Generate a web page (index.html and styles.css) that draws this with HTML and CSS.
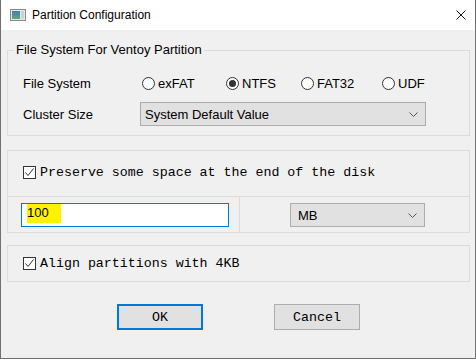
FILE: index.html
```html
<!DOCTYPE html>
<html lang="en">
<head>
  <meta charset="UTF-8">
  <title>Partition Configuration</title>
  <link rel="stylesheet" href="styles.css">
</head>
<body>
  <div class="window">
    <div class="titlebar">
      <svg class="app-icon" width="16" height="12" viewBox="0 0 16 12">
        <defs>
          <linearGradient id="pane" x1="0" y1="0" x2="0" y2="1">
            <stop offset="0" stop-color="#3f7fb8"/>
            <stop offset="1" stop-color="#5aa87a"/>
          </linearGradient>
        </defs>
        <rect x="0.5" y="0.5" width="15" height="11" fill="#e8e8e8" stroke="#8a8a8a"/>
        <rect x="2" y="2" width="8" height="8" fill="url(#pane)"/>
        <rect x="11" y="2" width="3" height="8" fill="#c9d3dc"/>
      </svg>
      <span class="title">Partition Configuration</span>
      <svg class="close" width="10" height="10" viewBox="0 0 10 10">
        <path d="M0.5 0.5 L9.5 9.5 M9.5 0.5 L0.5 9.5" stroke="#111" stroke-width="1"/>
      </svg>
    </div>

    <div class="content">
      <fieldset class="group">
        <legend>File System For Ventoy Partition</legend>
        <div class="form-row">
          <span class="label">File System</span>
          <div class="radios">
            <label class="radio"><span class="dot"></span>exFAT</label>
            <label class="radio checked"><span class="dot"></span>NTFS</label>
            <label class="radio"><span class="dot"></span>FAT32</label>
            <label class="radio"><span class="dot"></span>UDF</label>
          </div>
        </div>
        <div class="form-row select-row">
          <span class="label">Cluster Size</span>
          <div class="combo combo-wide">
            <span>System Default Value</span>
            <svg class="chevron" width="9" height="5" viewBox="0 0 9 5"><path d="M0.5 0.5 L4.5 4.5 L8.5 0.5" fill="none" stroke="#555"/></svg>
          </div>
        </div>
      </fieldset>

      <div class="box preserve">
        <div class="check-row tall">
          <span class="checkbox">
            <svg width="11" height="11" viewBox="0 0 11 11"><path d="M1.5 5.5 L4 8.5 L9.5 1.5" fill="none" stroke="#333" stroke-width="1"/></svg>
          </span>
          <span class="mono">Preserve some space at the end of the disk</span>
        </div>
        <div class="size-row">
          <div class="size-cell">
            <div class="textbox"><span class="mark">100</span></div>
          </div>
          <div class="unit-cell">
            <div class="combo combo-unit">
              <span>MB</span>
              <svg class="chevron" width="9" height="5" viewBox="0 0 9 5"><path d="M0.5 0.5 L4.5 4.5 L8.5 0.5" fill="none" stroke="#555"/></svg>
            </div>
          </div>
        </div>
      </div>

      <div class="box align">
        <div class="check-row">
          <span class="checkbox">
            <svg width="11" height="11" viewBox="0 0 11 11"><path d="M1.5 5.5 L4 8.5 L9.5 1.5" fill="none" stroke="#333" stroke-width="1"/></svg>
          </span>
          <span class="mono">Align partitions with 4KB</span>
        </div>
      </div>

      <div class="buttons">
        <button class="btn default">OK</button>
        <button class="btn">Cancel</button>
      </div>
    </div>
  </div>
</body>
</html>
```

FILE: styles.css
```css
* {
  box-sizing: border-box;
  margin: 0;
  padding: 0;
}
body {
  margin: 0;
  background-color: #f0f0f0;
  font-family: "Liberation Sans", Arial, sans-serif;
  font-size: 13px;
  color: #000;
}
.window {
  width: 476px;
  height: 359px;
  background-color: #f0f0f0;
  border: 1px solid #707070;
  border-top: none;
  overflow: hidden;
}
.titlebar {
  height: 30px;
  background-color: #fff;
  display: flex;
  align-items: center;
  padding-left: 9px;
}
.app-icon {
  display: block;
  margin-right: 6px;
}
.title {
  font-size: 12px;
  flex: 1;
}
.close {
  display: block;
  margin-right: 9px;
}
.content {
  padding: 0 5px 0 6px;
}
.group {
  margin-top: 12px;
  border: 1px solid #dcdcdc;
  padding: 14px 0 9px 15px;
}
.group legend {
  margin-left: -9px;
  padding: 0 2px;
  line-height: 16px;
  font-size: 13px;
}
.form-row {
  display: flex;
  align-items: center;
  height: 22px;
}
.select-row {
  margin-top: 8px;
  height: 24px;
}
.label {
  width: 117px;
}
.radios {
  display: grid;
  grid-template-columns: 84px 75px 81px auto;
  padding-left: 2px;
}
.radio {
  display: flex;
  align-items: center;
  gap: 3px;
}
.dot {
  width: 13px;
  height: 13px;
  border: 1px solid #333;
  border-radius: 50%;
  background-color: #fff;
  display: flex;
  align-items: center;
  justify-content: center;
}
.radio.checked .dot::after {
  content: "";
  width: 7px;
  height: 7px;
  border-radius: 50%;
  background-color: #333;
}
.combo {
  height: 24px;
  background-color: #e1e1e1;
  border: 1px solid #adadad;
  display: flex;
  align-items: center;
  justify-content: space-between;
  padding: 0 7px 0 4px;
}
.combo-wide {
  width: 286px;
}
.combo-unit {
  width: 135px;
  padding-left: 7px;
}
.chevron {
  display: block;
}
.box {
  border: 1px solid #dcdcdc;
}
.preserve {
  margin-top: 14px;
}
.check-row {
  display: flex;
  align-items: center;
  height: 35px;
  padding-left: 15px;
  gap: 4px;
}
.check-row.tall {
  height: 46px;
  padding-bottom: 2px;
  border-bottom: 1px solid #dcdcdc;
}
.checkbox {
  width: 13px;
  height: 13px;
  border: 1px solid #333;
  background-color: #fff;
  display: flex;
}
.checkbox svg {
  display: block;
}
.mono {
  font-family: "Liberation Mono", "Courier New", monospace;
  font-size: 13.3px;
}
.size-row {
  display: flex;
  height: 35px;
}
.size-cell {
  width: 232px;
  border-right: 1px solid #dcdcdc;
  padding: 6px 0 0 13px;
}
.unit-cell {
  padding: 6px 0 0 50px;
}
.textbox {
  width: 208px;
  height: 24px;
  background-color: #fff;
  border: 1px solid #0078d7;
  display: flex;
  align-items: center;
  padding-left: 5px;
  font-size: 13px;
}
.mark {
  background-color: #fff200;
  width: 34px;
  height: 19px;
  line-height: 18px;
  margin-top: -3px;
}
.align {
  margin-top: 12px;
}
.buttons {
  display: flex;
  justify-content: center;
  gap: 71px;
  margin-top: 22px;
}
.btn {
  width: 86px;
  height: 26px;
  background-color: #e1e1e1;
  border: 1px solid #adadad;
  font-family: "Liberation Mono", "Courier New", monospace;
  font-size: 13.3px;
  color: #000;
}
.btn.default {
  border: 2px solid #0078d7;
}
```
